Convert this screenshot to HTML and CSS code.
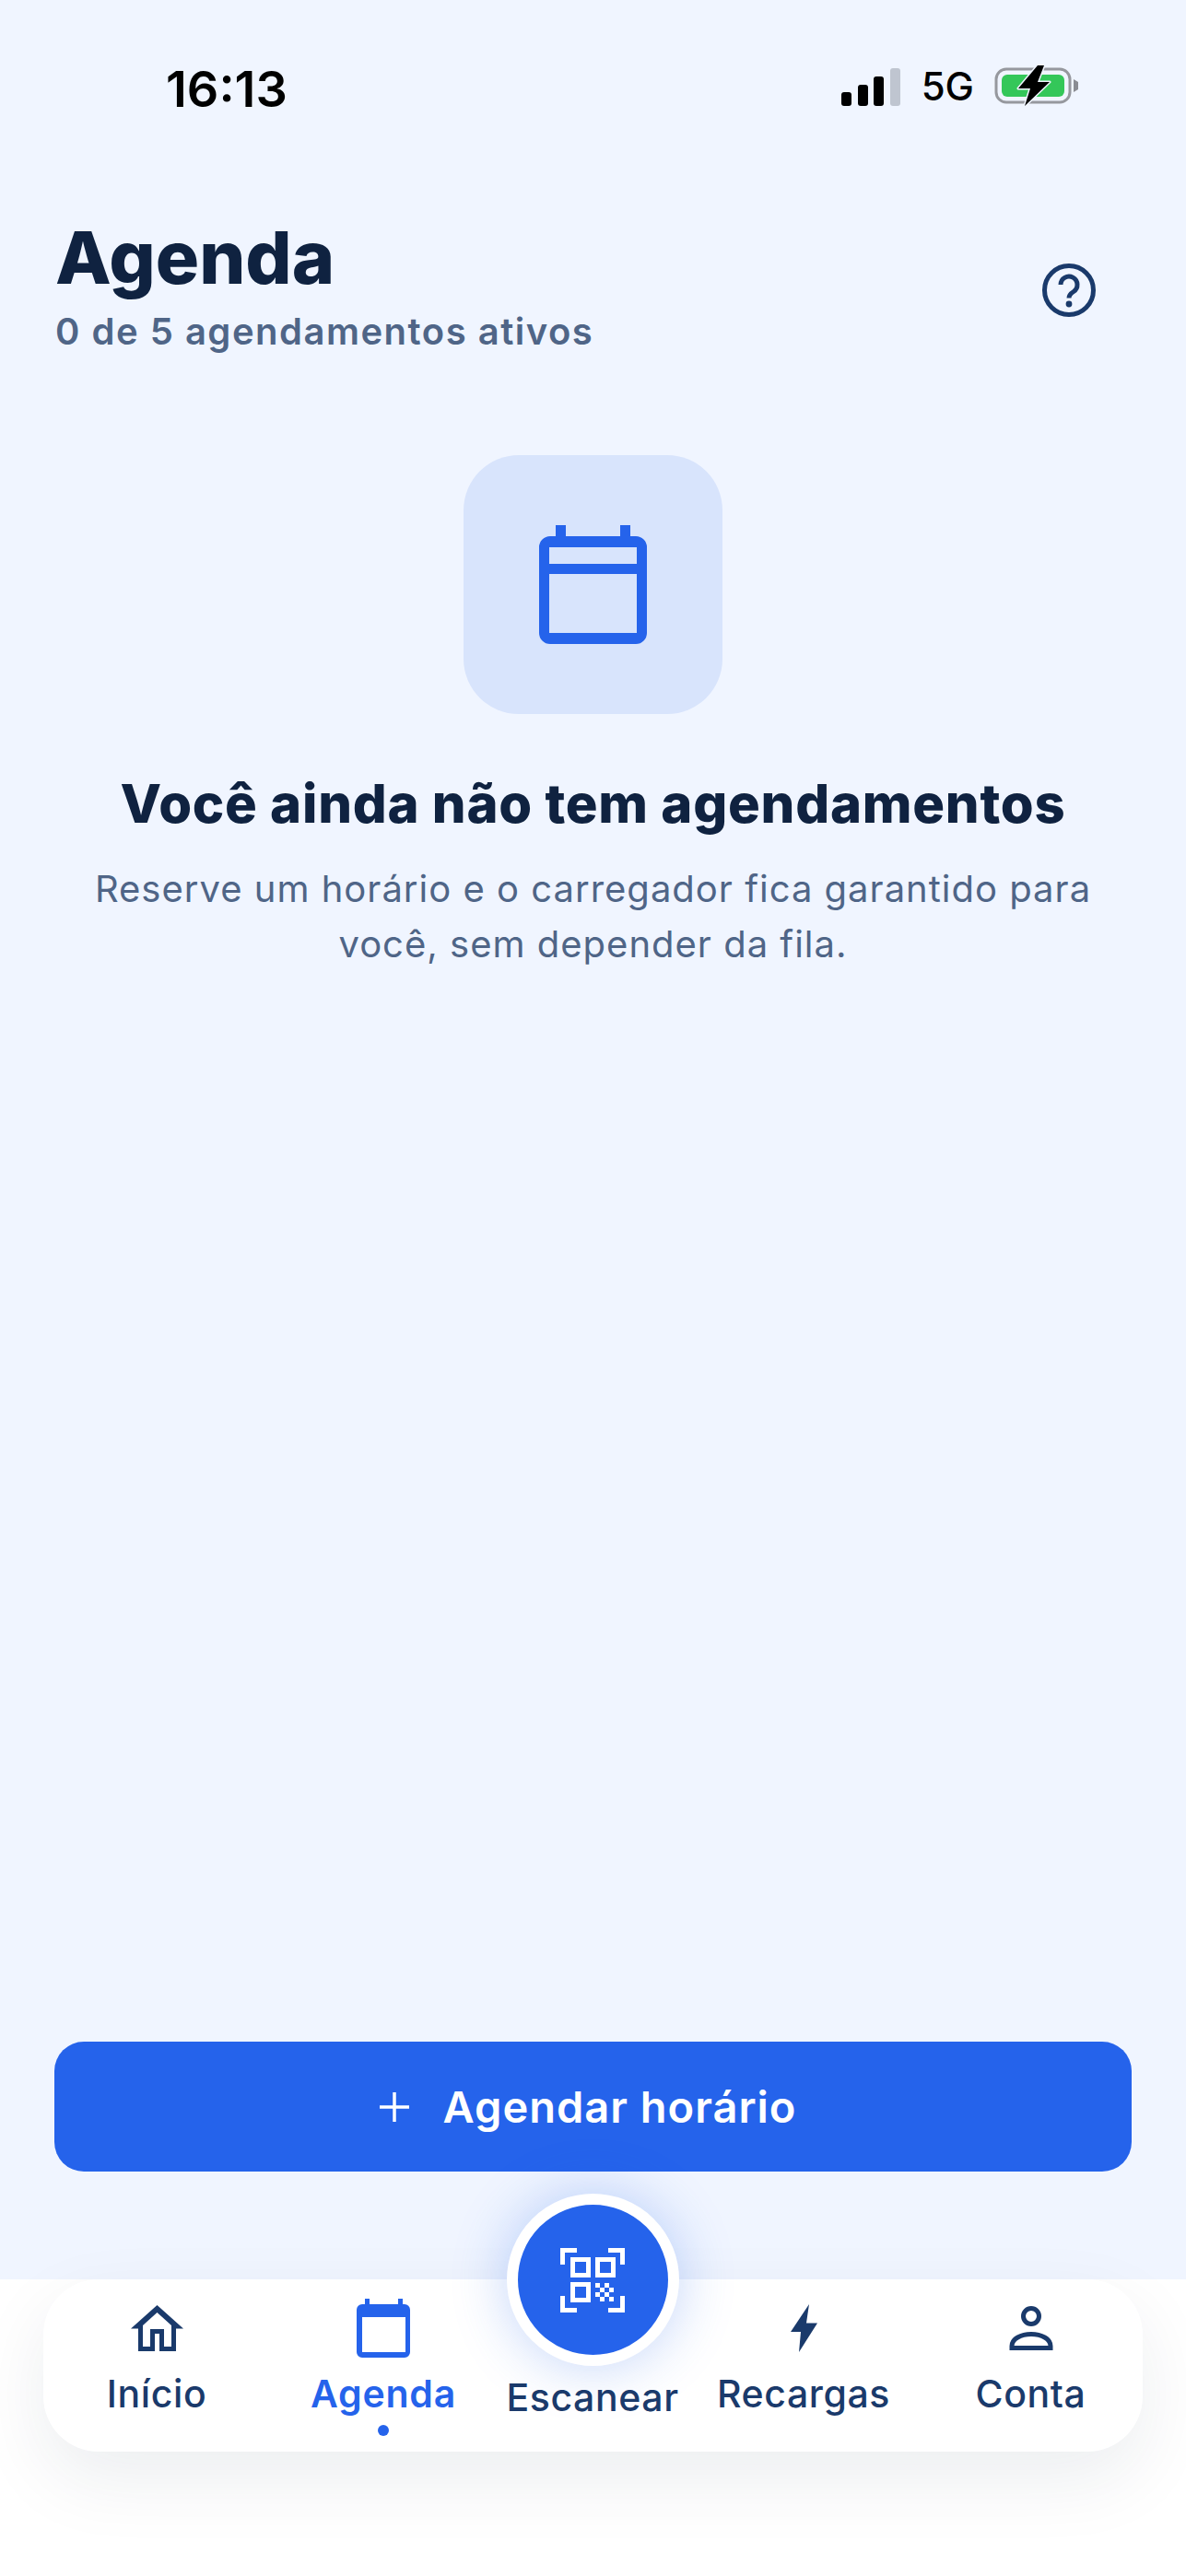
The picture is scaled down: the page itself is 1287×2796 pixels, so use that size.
FILE: index.html
```html
<!DOCTYPE html>
<html lang="pt-BR">
<head>
    <title>Agenda</title>
    <link rel="stylesheet" href="styles.css">
</head>
<body>
    <div class="screen">
        <div class="status-bar">
            <span class="time">16:13</span>
            <div class="status-icons">
                <svg class="signal" width="66" height="42" viewBox="0 0 66 42">
                    <rect x="1" y="27" width="11" height="15" rx="3" fill="#000"/>
                    <rect x="19" y="19" width="11" height="23" rx="3" fill="#000"/>
                    <rect x="36" y="10" width="11" height="32" rx="3" fill="#000"/>
                    <rect x="54" y="1" width="11" height="41" rx="3" fill="#bfc5d0"/>
                </svg>
                <span class="network">5G</span>
                <svg class="battery" width="92" height="44" viewBox="0 0 92 44">
                    <rect x="2" y="4" width="80" height="36" rx="11" fill="none" stroke="#96989e" stroke-width="3"/>
                    <rect x="8" y="10" width="68" height="24" rx="6" fill="#34c759"/>
                    <path d="M86 15 L91 18 V26 L86 29Z" fill="#8a8c92"/>
                    <path d="M47 0 L26 25 H39 L33 44 L60 18 H47 L54 0Z" fill="#000" stroke="#f0f5ff" stroke-width="3" paint-order="stroke" stroke-linejoin="round"/>
                </svg>
            </div>
        </div>

        <div class="page-header">
            <div>
                <h1 class="page-title">Agenda</h1>
                <div class="page-subtitle">0 de 5 agendamentos ativos</div>
            </div>
            <svg class="help-icon" width="60" height="60" viewBox="0 0 60 60" fill="none" stroke="#1a3a6b">
                <circle cx="30" cy="30" r="26.5" stroke-width="5"/>
                <path d="M21 24a9 9 0 1 1 14 7.500c-3.200 2-5 3.500-5 7" stroke-width="5"/>
                <circle cx="30" cy="45" r="3.400" fill="#1a3a6b" stroke="none"/>
            </svg>
        </div>

        <div class="empty-state">
            <div class="empty-tile">
                <svg width="117" height="129" viewBox="0 0 117 129" fill="#2563eb">
                    <path fill-rule="evenodd" d="M18 0h11v12h59V0h11v12h6a12 12 0 0 1 12 12v93a12 12 0 0 1-12 12H12a12 12 0 0 1-12-12V24a12 12 0 0 1 12-12h6V0zM11 24v18h95V24H11zm0 29v64h95V53H11z"/>
                </svg>
            </div>
            <h2 class="empty-title">Você ainda não tem agendamentos</h2>
            <p class="empty-text">Reserve um horário e o carregador fica garantido para<br>você, sem depender da fila.</p>
        </div>

        <button class="primary-button">
            <svg width="34" height="34" viewBox="0 0 34 34" stroke="#fff" stroke-width="3.500"><path d="M17 1v32M1 17h32"/></svg>
            <span>Agendar horário</span>
        </button>

        <div class="nav-area">
            <nav class="tab-bar">
                <div class="tab">
                    <svg class="tab-icon" width="57" height="54" viewBox="0 -2 57 54" fill="#1a3a6b">
                        <path fill-rule="evenodd" d="M28.500 0 L57 25.500 H49 V50 H8 V25.500 H0Z M28.500 8 L13 22 V45 H21 V26 H36 V45 H44 V22Z M26 31 H31 V50 H26Z"/>
                    </svg>
                    <span class="tab-label">Início</span>
                </div>
                <div class="tab tab-active">
                    <svg class="tab-icon-cal" width="58" height="64" viewBox="0 0 58 64" fill="#2563eb">
                        <path fill-rule="evenodd" d="M9 0h5v6h31V0h5v6h2a6 6 0 0 1 6 6v46a6 6 0 0 1-6 6H6a6 6 0 0 1-6-6V12a6 6 0 0 1 6-6h3V0zM6 20v38h47V20H6z"/>
                    </svg>
                    <span class="tab-label">Agenda</span>
                    <span class="tab-dot"></span>
                </div>
                <div class="tab tab-scan">
                    <div class="scan-button">
                        <svg width="70" height="70" viewBox="0 0 70 70" fill="#fff">
                            <path d="M0 0h18v5H5v13H0zM52 0h18v18h-5V5H52zM0 52h5v13h13v5H0zM65 52h5v18H52v-5h13z"/>
                            <path fill-rule="evenodd" d="M11 10h22v22H11zM16 15v12h12V15zM38 10h22v22H38zM43 15v12h12V15zM11 37h22v22H11zM16 42v12h12V42z"/>
                            <path d="M38 38h5v5h-5zM48 38h5v5h-5zM43 43h5v5h-5zM53 43h5v5h-5zM38 48h5v5h-5zM48 48h5v5h-5zM43 53h5v5h-5zM53 53h5v5h-5z"/>
                        </svg>
                    </div>
                    <span class="tab-label">Escanear</span>
                </div>
                <div class="tab">
                    <svg class="tab-icon" width="29" height="54" viewBox="0 -1 29 54" fill="#1a3a6b">
                        <path d="M20 0 L0 30 H11 L9 52 L29 20.500 H17Z"/>
                    </svg>
                    <span class="tab-label">Recargas</span>
                </div>
                <div class="tab">
                    <svg class="tab-icon" width="48" height="54" viewBox="0 -3 48 54" fill="none" stroke="#1a3a6b" stroke-width="5">
                        <circle cx="24" cy="11" r="8.500"/>
                        <path d="M3 45.500v-2c0-8 10-13 21-13s21 5 21 13v2z"/>
                    </svg>
                    <span class="tab-label">Conta</span>
                </div>
            </nav>
        </div>
    </div>
</body>
</html>
```

FILE: styles.css
```css
* {
    box-sizing: border-box;
}
html, body {
    margin: 0;
    padding: 0;
}
body {
    font-family: Inter, "Noto Sans", sans-serif;
    background-color: #f0f5ff;
}
h1, h2, p {
    margin: 0;
}
.screen {
    width: 1287px;
    height: 2796px;
    display: flex;
    flex-direction: column;
    overflow: hidden;
}

/* status bar */
.status-bar {
    height: 130px;
    padding: 71px 116px 0 180px;
    display: flex;
    justify-content: space-between;
    align-items: flex-start;
}
.time {
    font-size: 54px;
    line-height: 52px;
    font-weight: 600;
    color: #000;
}
.status-icons {
    display: flex;
    align-items: flex-end;
    gap: 22px;
}
.network {
    font-size: 42px;
    line-height: 42px;
    font-weight: 500;
    color: #000;
}

/* header */
.page-header {
    padding: 105px 97px 0 60px;
    display: flex;
    justify-content: space-between;
    align-items: center;
}
.page-title {
    font-size: 79px;
    line-height: 88px;
    font-weight: 800;
    color: #0f2240;
}
.page-subtitle {
    margin-top: 12px;
    font-size: 40px;
    line-height: 50px;
    font-weight: 600;
    letter-spacing: 1.5px;
    color: #4f6587;
}
.help-icon {
    margin-top: 9px;
}

/* empty state */
.empty-state {
    flex: 1;
    display: flex;
    flex-direction: column;
    align-items: center;
    padding-top: 109px;
}
.empty-tile {
    width: 281px;
    height: 281px;
    border-radius: 60px;
    background-color: #d8e4fc;
    display: flex;
    align-items: center;
    justify-content: center;
}
.empty-title {
    margin-top: 63px;
    font-size: 58px;
    line-height: 68px;
    font-weight: 800;
    letter-spacing: 0.75px;
    color: #0f2240;
}
.empty-text {
    margin-top: 29px;
    font-size: 40px;
    line-height: 60px;
    letter-spacing: 1px;
    text-align: center;
    color: #4f6587;
}

/* button */
.primary-button {
    height: 141px;
    margin: 0 59px 117px;
    padding: 0 12px 0 0;
    border: none;
    border-radius: 32px;
    background-color: #2563eb;
    color: white;
    display: flex;
    align-items: center;
    justify-content: center;
    gap: 36px;
    font-family: Inter, "Noto Sans", sans-serif;
    font-size: 47px;
    font-weight: 600;
    letter-spacing: 1px;
}

/* bottom nav */
.nav-area {
    height: 322px;
    background-color: white;
    padding: 0 47px;
}
.tab-bar {
    position: relative;
    height: 187px;
    border-radius: 60px;
    background-color: white;
    box-shadow: 0 30px 80px rgba(15, 34, 64, 0.08);
    display: grid;
    grid-template-columns: 246px 246px 208px 250px 243px;
}
.tab {
    display: flex;
    flex-direction: column;
    align-items: center;
    padding-top: 26px;
}
.tab-label {
    margin-top: 19px;
    font-size: 41px;
    line-height: 50px;
    font-weight: 500;
    letter-spacing: 0.6px;
    color: #1a3a6b;
    white-space: nowrap;
}
.tab-active {
    padding-top: 21px;
}
.tab-active .tab-label {
    margin-top: 14px;
    font-weight: 600;
    letter-spacing: 0.8px;
    color: #2563eb;
}
.tab-dot {
    width: 12px;
    height: 12px;
    margin-top: 9px;
    border-radius: 50%;
    background-color: #2563eb;
}
.tab-scan {
    padding-top: 0;
}
.tab-scan .tab-label {
    margin-top: 9px;
}
.scan-button {
    width: 187px;
    height: 187px;
    margin-top: -93px;
    border: 12px solid white;
    border-radius: 50%;
    background-color: #2563eb;
    box-shadow: 0 0 60px rgba(37, 99, 235, 0.28);
    display: flex;
    align-items: center;
    justify-content: center;
}
```
